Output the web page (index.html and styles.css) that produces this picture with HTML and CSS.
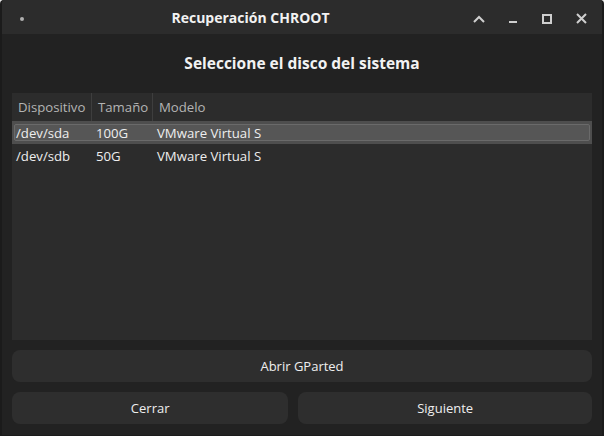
FILE: index.html
```html
<!DOCTYPE html>
<html lang="es">
<head>
<meta charset="utf-8">
<title>Recuperación CHROOT</title>
<link rel="stylesheet" href="styles.css">
</head>
<body>
<div class="window">
  <header class="titlebar">
    <div class="tb-left"><span class="dot"></span></div>
    <div class="tb-title">Recuperación CHROOT</div>
    <div class="tb-controls">
      <span class="ctl"><svg width="12" height="8" viewBox="0 0 12 8"><path d="M1 7 L6 2 L11 7" fill="none" stroke="#cfcfcf" stroke-width="2"/></svg></span>
      <span class="ctl"><svg width="10" height="10" viewBox="0 0 10 10"><path d="M1 8 H9" fill="none" stroke="#cfcfcf" stroke-width="2"/></svg></span>
      <span class="ctl"><svg width="10" height="10" viewBox="0 0 10 10"><rect x="1" y="1" width="8" height="8" fill="none" stroke="#cfcfcf" stroke-width="2"/></svg></span>
      <span class="ctl"><svg width="11" height="11" viewBox="0 0 11 11"><path d="M1 1 L10 10 M10 1 L1 10" fill="none" stroke="#cfcfcf" stroke-width="2"/></svg></span>
    </div>
  </header>
  <main class="content">
    <div class="heading">Seleccione el disco del sistema</div>
    <div class="table">
      <div class="thead">
        <div class="th c1">Dispositivo</div>
        <div class="th c2">Tamaño</div>
        <div class="th c3">Modelo</div>
      </div>
      <div class="tr selected">
        <div class="td c1">/dev/sda</div>
        <div class="td c2">100G</div>
        <div class="td c3">VMware Virtual S</div>
      </div>
      <div class="tr">
        <div class="td c1">/dev/sdb</div>
        <div class="td c2">50G</div>
        <div class="td c3">VMware Virtual S</div>
      </div>
    </div>
    <button class="btn">Abrir GParted</button>
    <div class="btn-row">
      <button class="btn grow">Cerrar</button>
      <button class="btn grow">Siguiente</button>
    </div>
  </main>
</div>
</body>
</html>
```
FILE: styles.css
```css
html, body {
  margin: 0;
  padding: 0;
  background: #e6e6e6;
}
body {
  font-family: "Open Sans", "Noto Sans", sans-serif;
  color: #eeeeee;
}
.window {
  width: 604px;
  height: 436px;
  box-sizing: border-box;
  display: flex;
  flex-direction: column;
  background: #222222;
  border-radius: 4px 4px 0 0;
  overflow: hidden;
  border-left: 2px solid #1b1b1b;
  border-right: 2px solid #1b1b1b;
  border-bottom: 1px solid #1b1b1b;
}
.titlebar {
  height: 34px;
  flex: none;
  display: flex;
  align-items: center;
  background: #2c2c2c;
  margin: 0 -2px;
}
.tb-left {
  width: 39px;
  flex: none;
  display: flex;
  align-items: center;
  padding-left: 20px;
  box-sizing: border-box;
}
.dot {
  width: 4px;
  height: 4px;
  border-radius: 50%;
  background: #b0b0b0;
  margin-top: 4px;
}
.tb-title {
  flex: 1;
  text-align: center;
  font-weight: 700;
  font-size: 14px;
  color: #f2f2f2;
  padding-top: 1px;
}
.tb-controls {
  flex: none;
  display: flex;
  padding-right: 6px;
}
.ctl {
  width: 34px;
  height: 34px;
  display: flex;
  align-items: center;
  justify-content: center;
  padding-top: 3px;
  box-sizing: border-box;
}
.content {
  flex: 1;
  display: flex;
  flex-direction: column;
  gap: 10px;
  padding: 10px;
}
.heading {
  height: 39px;
  line-height: 38px;
  text-align: center;
  font-weight: 700;
  font-size: 15.5px;
  color: #f2f2f2;
}
.table {
  height: 247px;
  flex: none;
  background: #2c2c2c;
  font-size: 13.2px;
}
.thead {
  display: flex;
  height: 28px;
  align-items: stretch;
}
.th {
  display: flex;
  align-items: center;
  padding-left: 6px;
  box-sizing: border-box;
  color: #b4b4b4;
}
.th.c1, .th.c2 {
  border-right: 1px solid #3e3e3e;
}
.c1 { width: 80px; flex: none; box-sizing: border-box; }
.c2 { width: 61px; flex: none; box-sizing: border-box; }
.c3 { flex: 1; }
.tr {
  display: flex;
  height: 23px;
  align-items: center;
  position: relative;
}
.td {
  padding-left: 4px;
  padding-top: 1px;
  color: #eeeeee;
}
.tr.selected {
  background: #4e4e4e;
}
.tr.selected::after {
  content: "";
  position: absolute;
  top: 3px;
  bottom: 3px;
  left: 2px;
  right: 2px;
  border: 1px solid #6a6a6a;
  border-radius: 2px;
  background: #565656;
  z-index: 0;
}
.tr.selected .td {
  position: relative;
  z-index: 1;
}
.btn {
  height: 32px;
  border: none;
  border-radius: 8px;
  background: #2e2e2e;
  color: #eeeeee;
  font-family: "Open Sans", "Noto Sans", sans-serif;
  font-size: 13px;
  padding: 0 20px;
}
.btn-row {
  display: flex;
  gap: 10px;
}
.btn.grow {
  flex: 1 1 auto;
}
```
